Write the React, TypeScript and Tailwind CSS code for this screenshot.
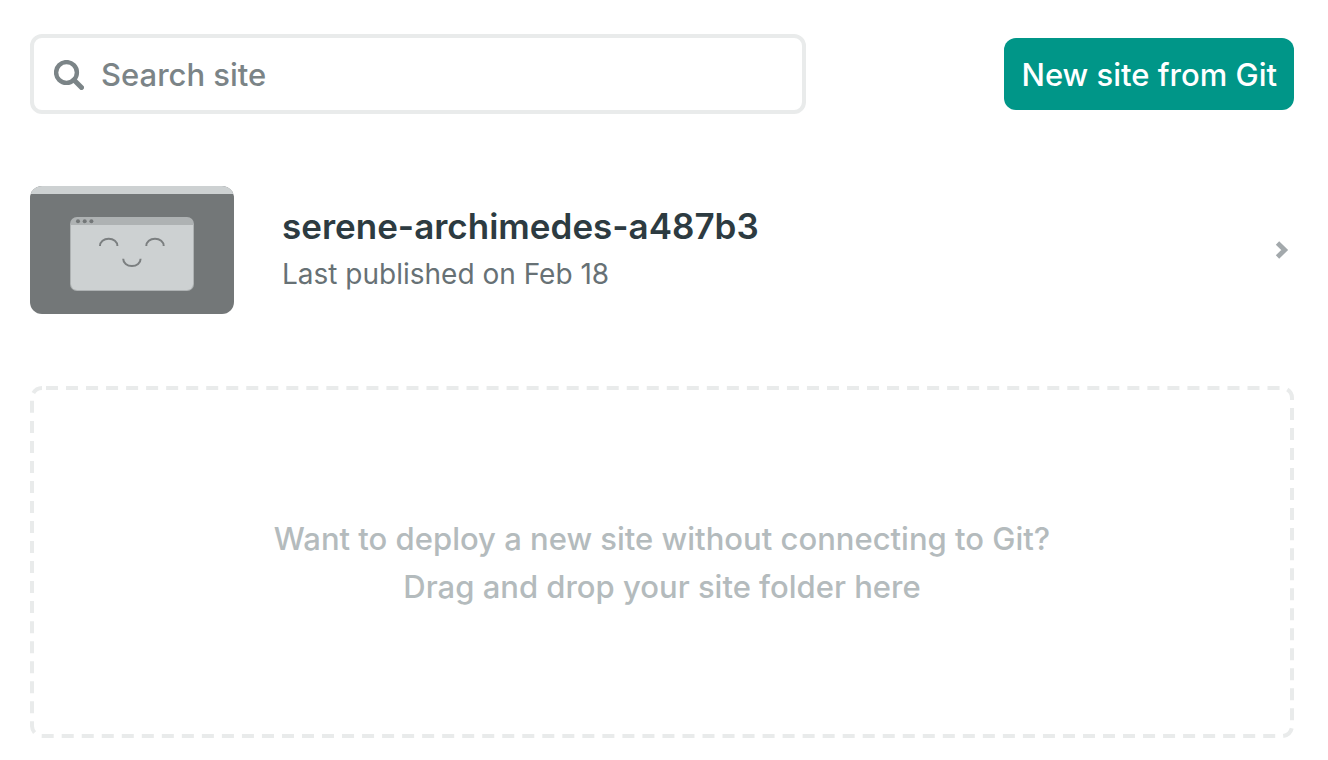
function SearchIcon() {
  return (
    <svg aria-hidden="true" viewBox="0 0 30 30" className="size-[30px] shrink-0" fill="none" stroke="currentColor">
      <circle cx="12.5" cy="12.5" r="10.4" strokeWidth="4.4" />
      <path d="M20 20l7.500 7.500" strokeWidth="5" strokeLinecap="round" />
    </svg>
  );
}

function SiteThumbnail() {
  return (
    <div className="flex h-32 w-[204px] shrink-0 flex-col overflow-hidden rounded-xl bg-[#737778]">
      <div className="h-2 bg-[#cdd1d2]" />
      <div className="flex grow items-center justify-center">
        <svg aria-hidden="true" viewBox="0 0 124 74" className="h-[74px] w-[124px]" fill="none">
          <rect width="124" height="74" rx="7" fill="#aeb2b3" />
          <path d="M1 8h122v59a6 6 0 0 1-6 6H7a6 6 0 0 1-6-6z" fill="#cdd1d2" />
          <g fill="#737778">
            <circle cx="8" cy="4.2" r="2" />
            <circle cx="14.7" cy="4.2" r="2" />
            <circle cx="21.4" cy="4.2" r="2" />
          </g>
          <g stroke="#7b7f80" strokeWidth="2">
            <path d="M30 29c0-4.200 3.800-7.300 8.700-7.300s8.700 3.100 8.700 7.300" />
            <path d="M76.300 29c0-4.200 3.800-7.300 8.700-7.300s8.700 3.100 8.700 7.300" />
            <path d="M53.200 41.700c0 4.200 3.800 7.300 8.700 7.300s8.700-3.100 8.700-7.300" />
          </g>
        </svg>
      </div>
    </div>
  );
}

function DropZone() {
  return (
    <section className="relative flex h-[352px] flex-col items-center justify-center rounded-xl pt-0.5 text-center text-[31px] leading-[48px] font-medium text-[#b4bbbd]">
      <svg aria-hidden="true" className="pointer-events-none absolute inset-0 size-full overflow-visible p-0.5">
        <rect
          width="100%"
          height="100%"
          rx="10"
          fill="none"
          stroke="#e9ebeb"
          strokeWidth="4"
          strokeDasharray="12.015 8.01"
          strokeDashoffset="-4"
        />
      </svg>
      <p>Want to deploy a new site without connecting to Git?</p>
      <p>Drag and drop your site folder here</p>
    </section>
  );
}

export default function App() {
  return (
    <main className="min-h-screen bg-white pt-[34px] pr-[34px] pb-[22px] pl-[30px] font-['Inter','Liberation_Sans',sans-serif]">
      <header className="flex items-center justify-between gap-8">
        <label className="flex h-20 max-w-[776px] grow items-center gap-[17px] rounded-xl border-4 border-[#e9ebeb] px-5 pt-0.5 text-[#7b8487]">
          <SearchIcon />
          <input
            type="search"
            aria-label="Search site"
            placeholder="Search site"
            className="w-full min-w-0 bg-transparent text-[31px] font-medium outline-none placeholder:text-[#7b8487]"
          />
        </label>
        <button type="button" className="h-[72px] shrink-0 rounded-xl bg-[#009688] px-[17px] pt-0.5 text-[31px] font-medium text-white">
          New site from Git
        </button>
      </header>

      <a href="#site" className="my-[72px] flex items-center">
        <SiteThumbnail />
        <div className="ml-12 grow">
          <h2 className="text-[35px] leading-[48px] font-semibold text-[#2d3b41]">serene-archimedes-a487b3</h2>
          <p className="text-[28px] leading-[48px] text-[#677175]">Last published on Feb 18</p>
        </div>
        <svg aria-hidden="true" viewBox="0 0 14 20" className="mr-[5px] h-5 w-3.5 text-[#a3a9ac]" fill="none" stroke="currentColor" strokeWidth="4.8">
          <path d="M2.500 3L9.700 10l-7.200 7" />
        </svg>
      </a>

      <DropZone />
    </main>
  );
}
